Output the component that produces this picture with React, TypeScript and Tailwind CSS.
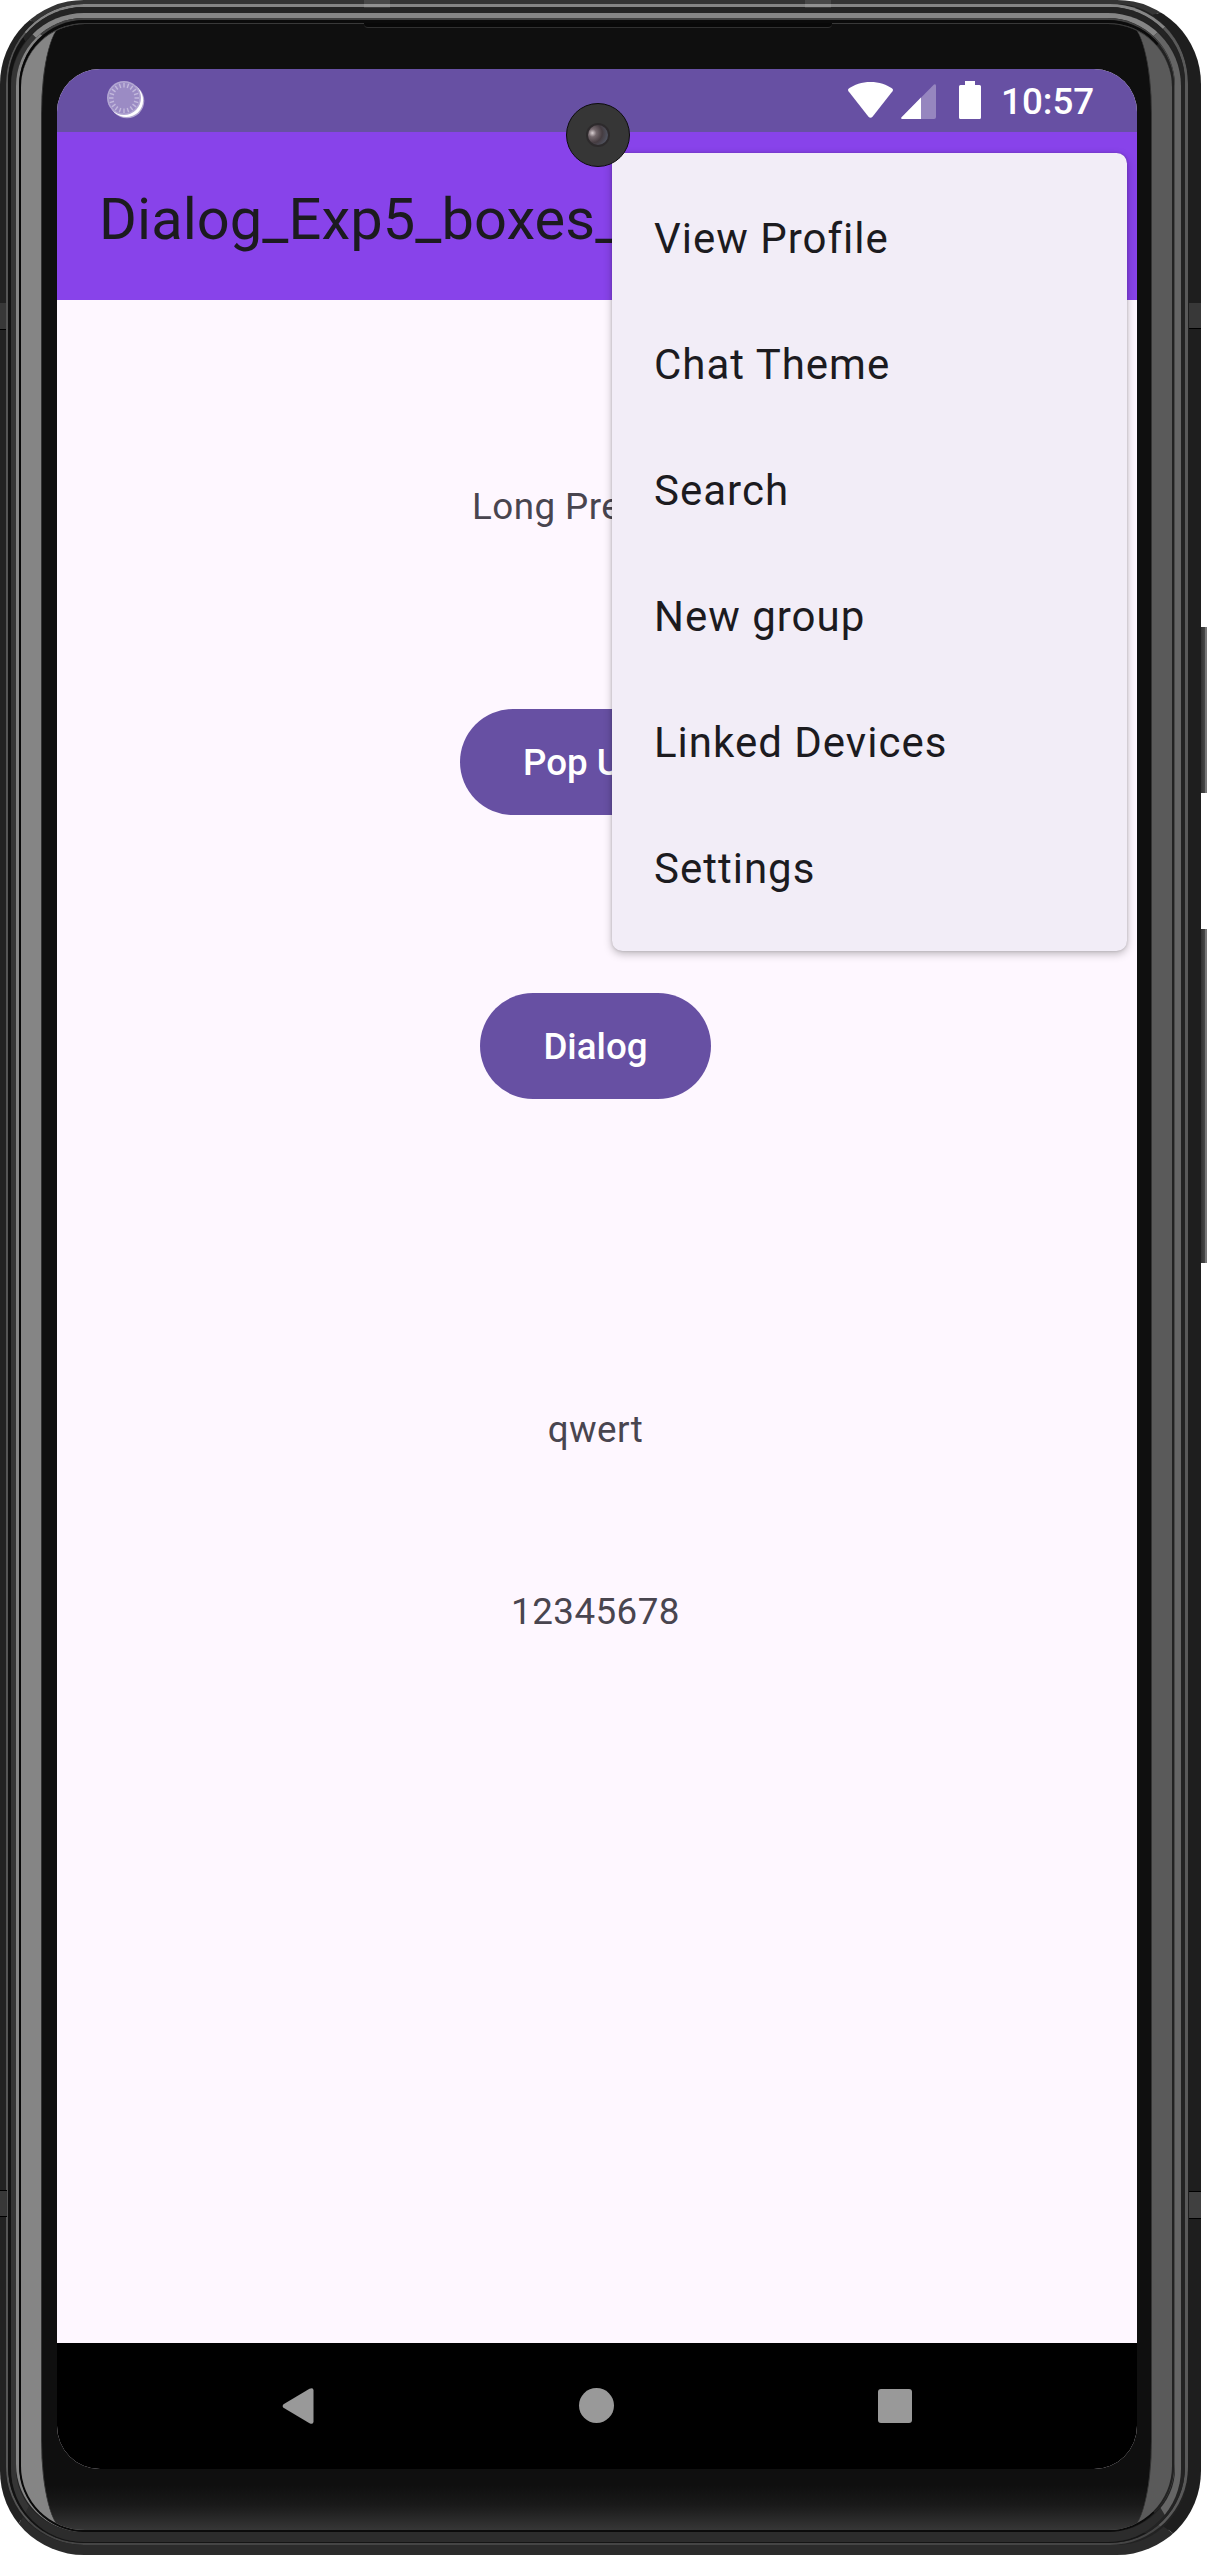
import type { ReactNode } from "react";

const menuItems = ["View Profile", "Chat Theme", "Search", "New group", "Linked Devices", "Settings"];

function Spinner() {
  const ticks = Array.from({ length: 20 }, (_, i) => i * 18);
  return (
    <svg width="38" height="38" viewBox="0 0 38 38" className="block">
      <circle cx="20" cy="20" r="17.3" fill="#b3a7d1" />
      <circle cx="19.2" cy="19.2" r="16.9" fill="#fff" />
      <circle cx="17" cy="17" r="17" fill="#b3a7d3" />
      <circle cx="17" cy="17" r="15.4" fill="#9b8bc4" />
      {ticks.map((a) => (
        <line key={a} x1="17" y1="2" x2="17" y2="6.5" stroke="#c2b8dc" strokeWidth="1.4" transform={`rotate(${a} 17 17)`} />
      ))}
    </svg>
  );
}

function StatusBar() {
  return (
    <div className="flex h-[63px] shrink-0 items-start bg-[#6750a3] pl-[49.5px] pt-3">
      <Spinner />
      <svg width="45" height="37" viewBox="0 0 45 37" className="ml-[703.5px] mt-px block">
        <path d="M22.5 0C14 0 6 2.600.8 6.600Q-.6 7.800.5 9.300L20.500 34.700Q22.500 37 24.500 34.700L44.500 9.300Q45.600 7.800 44.200 6.600C39 2.600 31 0 22.500 0Z" fill="#fff" />
      </svg>
      <svg width="35" height="35" viewBox="0 0 35 35" className="ml-2 mt-[3px] block">
        <path d="M.6 33.200L33 .6Q35-.6 35 2V33Q35 35 33 35H1.500Q-.6 35 .6 33.200Z" fill="#9686bf" />
        <path d="M.6 33.200L20 13.500V35H1.500Q-.6 35 .6 33.200Z" fill="#fff" />
      </svg>
      <svg width="22" height="38" viewBox="0 0 22 38" className="ml-[23px] block">
        <path d="M6 0H16V4H20.500Q22 4 22 5.500V36.500Q22 38 20.500 38H1.500Q0 38 0 36.500V5.500Q0 4 1.500 4H6Z" fill="#fff" />
      </svg>
      <span className="ml-5 mt-px text-[36.750px] font-medium leading-[40px] text-white">10:57</span>
    </div>
  );
}

function PopupMenu() {
  return (
    <div className="absolute left-[555px] top-[84px] w-[515px] rounded-[10.5px] bg-[#f2edf7] py-[21px] shadow-[0_3px_8px_rgba(0,0,0,0.26),0_0_3px_rgba(0,0,0,0.16)]">
      {menuItems.map((item) => (
        <div key={item} className="flex h-[126px] items-center pl-[42px] pt-0.5 text-[42px] tracking-[1px] text-[#1c1b1f]">
          {item}
        </div>
      ))}
    </div>
  );
}

function NavBar() {
  return (
    <div className="flex h-[126px] shrink-0 items-center bg-black pl-[225px]">
      <svg width="32" height="36" viewBox="0 0 32 36" className="block">
        <path d="M27.500.7Q31.500-1 31.500 2.500V33.500Q31.500 37 27.500 35.300L1.500 19.800Q-.2 18 1.500 16.200Z" fill="#999" />
      </svg>
      <div className="-mt-0.5 ml-[265px] size-[35px] rounded-full bg-[#999]" />
      <div className="ml-[264px] size-[34px] rounded-[3px] bg-[#999]" />
    </div>
  );
}

function Camera() {
  return (
    <div className="absolute left-[509px] top-[34px] flex size-16 items-center justify-center rounded-full border border-[#0c0c0c] bg-[#363636]">
      <div className="size-6 rounded-full border-2 border-[#2d2a2c] bg-[radial-gradient(circle_at_22%_40%,#d9cfd2_0%,#75696e_20%,#453c41_50%,#566070_95%)]" />
    </div>
  );
}

function Screen() {
  return (
    <div className="relative flex h-[2400px] w-[1080px] flex-col overflow-hidden rounded-[43px] bg-[#fef7ff]">
      <StatusBar />
      <div className="flex h-[168px] shrink-0 items-center bg-[#8843ea] pl-[42px] pt-1.5 text-[57.750px] tracking-[0.1px] text-[#1c1b1f]">
        Dialog_Exp5_boxes_
      </div>
      <div className="flex grow flex-col pl-[403px] text-[36.750px] leading-[44px] text-[#49454f]">
        <div className="mt-[185px] whitespace-nowrap pl-[12px] tracking-[0.45px]">Long Press</div>
        <button className="mt-[180px] h-[106px] w-[271px] rounded-full bg-[#6750a3] pl-[63px] pt-px text-left font-medium text-white">
          Pop Up
        </button>
        <button className="ml-5 mt-[178px] h-[106px] w-[231px] rounded-full bg-[#6750a3] pt-px font-medium text-white">
          Dialog
        </button>
        <div className="mt-[309px] w-[271px] text-center tracking-[0.45px]">qwert</div>
        <div className="mt-[138px] w-[271px] text-center tracking-[0.45px]">12345678</div>
      </div>
      <NavBar />
      <PopupMenu />
      <Camera />
    </div>
  );
}

function Body({ children }: { children: ReactNode }) {
  return (
    <div className="relative h-[2555px] w-[1201px] overflow-hidden rounded-[84px] border-b-[10px] border-l-[6px] border-r-[13px] border-t-[4px] border-b-[#2b2b2b] border-l-[#222] border-r-[#1e1e1e] border-t-[#343434] bg-[#222]">
      <div className="h-full rounded-[78px] border-b-2 border-l-2 border-r-[3px] border-t-[3px] border-b-[#454545] border-l-[#555] border-r-[#595959] border-t-[#858585]">
        <div className="h-full rounded-[76px] border-b border-l-[3px] border-r-4 border-t-[6px] border-b-[#161616] border-l-[#121212] border-r-[#232323] border-t-[#242424]">
          <div className="h-full rounded-[73px] border-b-[10px] border-l-[5px] border-r-[6px] border-t-[5px] border-b-[#2c2c2c] border-l-[#353535] border-r-[#656565] border-t-[#858585]">
            <div className="h-full rounded-[68px] border-l-[3px] border-r border-t-2 border-l-[#858585] border-r-[#484848] border-t-[#404040]">
              <div className="h-full rounded-[66px] border-b-2 border-l-2 border-r-2 border-t-[3px] border-b-[#0b0b0b] border-l-[#080808] border-r-[#222] border-t-[#0b0b0b]">
                <div className="h-full overflow-hidden rounded-[64px] border-t border-t-[#393939] bg-[linear-gradient(to_right,#858585_0,#858585_50%,#5a5a5a_50%,#5a5a5a_100%)] pl-5 pr-5">
                  <div className="h-full rounded-[24px/90px] border-x border-x-[#343434] bg-[linear-gradient(to_bottom,#0f0f0f_0,#0f0f0f_98.2%,#191919_99%,#363636_100%)] pl-[15px] pt-[45px]">
                    {children}
                  </div>
                </div>
              </div>
            </div>
          </div>
        </div>
      </div>
    </div>
  );
}

export default function App() {
  return (
    <div className="relative h-[2555px] w-[1207px] overflow-hidden bg-white font-['Roboto',sans-serif]">
      <div className="absolute left-[1198px] top-[627px] h-[166px] w-[9px] border-r-2 border-r-[#777] bg-linear-to-r from-[#222] to-[#484848]" />
      <div className="absolute left-[1198px] top-[929px] h-[334px] w-[9px] border-r-2 border-r-[#777] bg-linear-to-r from-[#222] to-[#484848]" />
      <Body>
        <Screen />
      </Body>
      <div className="absolute left-[364px] top-[23px] h-[5px] w-[468px] rounded-b-sm border-b border-b-[#303030] bg-[#080808]" />
      <div className="absolute left-[364px] top-0 h-2 w-[26px] bg-white/10" />
      <div className="absolute left-[805px] top-0 h-2 w-[26px] bg-white/10" />
      <div className="absolute left-0 top-[303px] h-[27px] w-[6px] border-b border-b-black bg-[#383838]" />
      <div className="absolute left-[1189px] top-[303px] h-[26px] w-3 border-b border-b-black bg-[#383838]" />
      <div className="absolute left-0 top-[2190px] h-[27px] w-[7px] border-y border-y-black bg-[#383838]" />
      <div className="absolute left-[1189px] top-[2191px] h-[28px] w-3 border-y border-y-black bg-[#404040]" />
    </div>
  );
}
